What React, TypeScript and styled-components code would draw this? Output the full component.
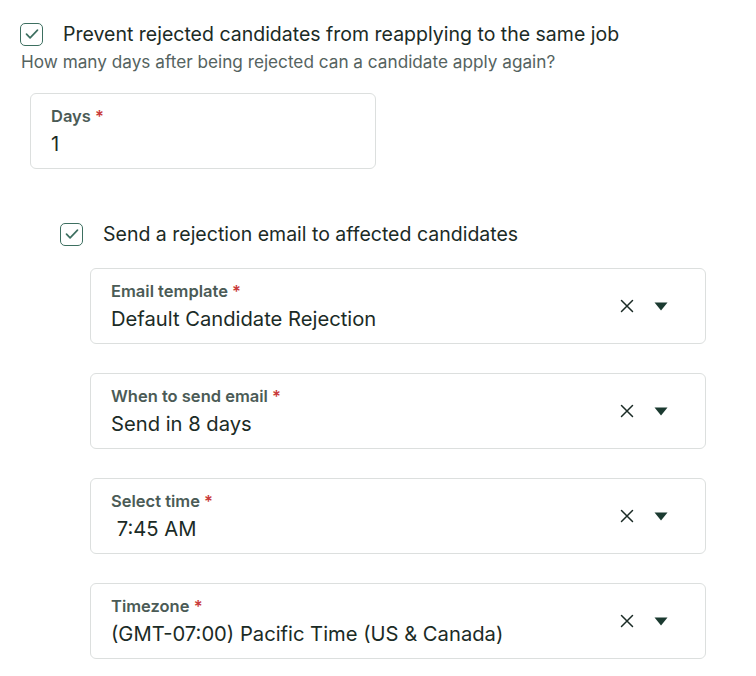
import React from 'react'
import styled, { createGlobalStyle } from 'styled-components'

const GlobalStyle = createGlobalStyle`
    body {
        margin: 0;
        background: #ffffff;
        font-family: Inter, 'Noto Sans', sans-serif;
        color: #1b2b26;
    }
`

const Page = styled.div`
    padding: 22px 0 0 20px;
    width: 686px;
`

const CheckRow = styled.label`
    display: flex;
    align-items: center;
    gap: 20px;
    font-size: 19.5px;
    line-height: 24px;
    color: #1b2b26;
`

const Box = styled.span`
    display: flex;
    align-items: center;
    justify-content: center;
    width: 21px;
    height: 21px;
    border: 1.5px solid #3d6f60;
    border-radius: 5px;
    flex-shrink: 0;
`

const Hint = styled.p`
    margin: 5px 0 0 1px;
    font-size: 17.2px;
    line-height: 22px;
    color: #55635f;
`

const Field = styled.div<{ $width?: string }>`
    display: flex;
    align-items: center;
    width: ${(p) => p.$width || '100%'};
    height: 76px;
    box-sizing: border-box;
    padding: 0 37px 0 20px;
    border: 1px solid #dcdfde;
    border-radius: 6px;
`

const FieldText = styled.div`
    flex: 1;
    display: flex;
    flex-direction: column;
    gap: 5px;
`

const Label = styled.span`
    font-size: 16.5px;
    font-weight: 600;
    line-height: 20px;
    color: #4b5b56;
    &::after {
        content: ' *';
        color: #c93a3a;
    }
`

const Value = styled.span`
    font-size: 20.2px;
    line-height: 25px;
    color: #1b2b26;
    white-space: pre;
`

const Controls = styled.div`
    display: flex;
    align-items: center;
    gap: 20px;
`

const DaysWrap = styled.div`
    margin: 20px 0 0 10px;
`

const Nested = styled.div`
    margin: 53px 0 0 40px;
`

const FieldList = styled.div`
    display: flex;
    flex-direction: column;
    gap: 29px;
    margin: 22px 0 0 30px;
`

const Check = () => (
    <Box>
        <svg width='14' height='12' viewBox='0 0 14 12' fill='none'>
            <path d='M1.5 6.2l3.6 3.6L12.5 2.2' stroke='#3d6f60' strokeWidth='1.7' strokeLinecap='round' strokeLinejoin='round' />
        </svg>
    </Box>
)

const ClearIcon = () => (
    <svg width='14' height='14' viewBox='0 0 14 14'>
        <path d='M1.5 1.5l11 11M12.5 1.5l-11 11' stroke='#1b2b26' strokeWidth='1.5' strokeLinecap='round' />
    </svg>
)

const CaretIcon = () => (
    <svg width='14' height='9' viewBox='0 0 14 9'>
        <path d='M0.5 0.5h13L7 8.5z' fill='#1b3a30' />
    </svg>
)

const SelectField = ({ label, value }: { label: string; value: string }) => (
    <Field>
        <FieldText>
            <Label>{label}</Label>
            <Value>{value}</Value>
        </FieldText>
        <Controls>
            <ClearIcon />
            <CaretIcon />
        </Controls>
    </Field>
)

const selects = [
    { label: 'Email template', value: 'Default Candidate Rejection' },
    { label: 'When to send email', value: 'Send in 8 days' },
    { label: 'Select time', value: ' 7:45 AM' },
    { label: 'Timezone', value: '(GMT-07:00) Pacific Time (US & Canada)' },
]

const App = () => {
    return (
        <>
            <GlobalStyle />
            <Page>
                <CheckRow>
                    <Check />
                    Prevent rejected candidates from reapplying to the same job
                </CheckRow>
                <Hint>How many days after being rejected can a candidate apply again?</Hint>
                <DaysWrap>
                    <Field $width='346px'>
                        <FieldText>
                            <Label>Days</Label>
                            <Value>1</Value>
                        </FieldText>
                    </Field>
                </DaysWrap>
                <Nested>
                    <CheckRow>
                        <Check />
                        Send a rejection email to affected candidates
                    </CheckRow>
                    <FieldList>
                        {selects.map((s) => (
                            <SelectField key={s.label} label={s.label} value={s.value} />
                        ))}
                    </FieldList>
                </Nested>
            </Page>
        </>
    )
}

export default App
